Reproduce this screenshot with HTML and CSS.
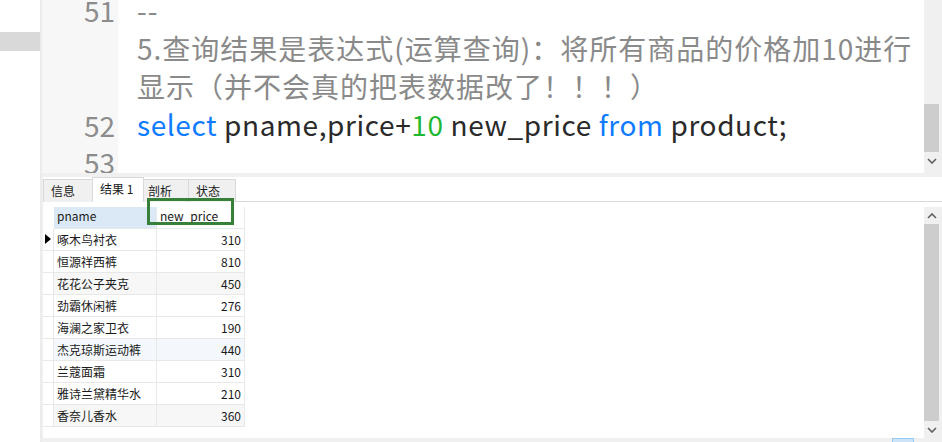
FILE: index.html
```html
<!DOCTYPE html>
<html>
<head>
<meta charset="utf-8">
<link rel="stylesheet" href="styles.css">
</head>
<body>
<div class="app">
  <div class="side"><div class="side-block"></div></div>
  <div class="main">
    <div class="editor">
      <div class="gutter">
        <div class="ln ln51">51</div>
        <div class="ln">52</div>
        <div class="ln">53</div>
      </div>
      <div class="code">
        <div class="line cm">--</div>
        <div class="line cm">5.查询结果是表达式(运算查询)：将所有商品的价格加10进行</div>
        <div class="line cm">显示（并不会真的把表数据改了！！！）</div>
        <div class="line"><span class="kw">select</span> pname,price+<span class="num">10</span> new_price <span class="kw">from</span> product;</div>
        <div class="line"></div>
      </div>
      <div class="vscroll ed-scroll">
        <div class="thumb ed-thumb"></div>
        <div class="arrow down">
          <svg width="10" height="6" viewBox="0 0 10 6"><path d="M1 1 L5 5 L9 1" fill="none" stroke="#606060" stroke-width="1.6"/></svg>
        </div>
      </div>
    </div>
    <div class="split"></div>
    <div class="results">
      <div class="tabs">
        <div class="tab t1">信息</div>
        <div class="tab active">结果 1</div>
        <div class="tab t3">剖析</div>
        <div class="tab t4">状态</div>
      </div>
      <div class="grid-area">
        <div class="grid">
          <div class="row head">
            <div class="ind"></div>
            <div class="cell c1 sel">pname</div>
            <div class="cell c2">new_price</div>
          </div>
          <div class="row"><div class="ind"><span class="tri"></span></div><div class="cell c1">啄木鸟衬衣</div><div class="cell c2 r">310</div></div>
          <div class="row"><div class="ind"></div><div class="cell c1">恒源祥西裤</div><div class="cell c2 r">810</div></div>
          <div class="row alt"><div class="ind"></div><div class="cell c1">花花公子夹克</div><div class="cell c2 r">450</div></div>
          <div class="row"><div class="ind"></div><div class="cell c1">劲霸休闲裤</div><div class="cell c2 r">276</div></div>
          <div class="row"><div class="ind"></div><div class="cell c1">海澜之家卫衣</div><div class="cell c2 r">190</div></div>
          <div class="row hover"><div class="ind"></div><div class="cell c1">杰克琼斯运动裤</div><div class="cell c2 r">440</div></div>
          <div class="row"><div class="ind"></div><div class="cell c1">兰蔻面霜</div><div class="cell c2 r">310</div></div>
          <div class="row"><div class="ind"></div><div class="cell c1">雅诗兰黛精华水</div><div class="cell c2 r">210</div></div>
          <div class="row alt"><div class="ind"></div><div class="cell c1">香奈儿香水</div><div class="cell c2 r">360</div></div>
          <div class="mark"></div>
        </div>
        <div class="vscroll grid-scroll">
          <div class="arrow up">
            <svg width="10" height="6" viewBox="0 0 10 6"><path d="M1 5 L5 1 L9 5" fill="none" stroke="#606060" stroke-width="1.6"/></svg>
          </div>
          <div class="thumb grid-thumb"></div>
          <div class="arrow down">
            <svg width="10" height="6" viewBox="0 0 10 6"><path d="M1 1 L5 5 L9 1" fill="none" stroke="#606060" stroke-width="1.6"/></svg>
          </div>
        </div>
      </div>
    </div>
    <div class="hbar"><div class="hthumb"></div></div>
  </div>
</div>
</body>
</html>
```
FILE: styles.css
```css
html, body {
  margin: 0;
  padding: 0;
  background: #ffffff;
}
body {
  width: 942px;
  height: 442px;
  overflow: hidden;
  font-family: "Noto Sans CJK SC", "DejaVu Sans", sans-serif;
}
.app {
  display: flex;
  width: 942px;
  height: 442px;
}
.side {
  width: 40px;
  flex: none;
  background: #ffffff;
  padding-top: 32px;
  box-sizing: border-box;
}
.side-block {
  height: 19px;
  background: #d9d9d9;
}
.main {
  flex: 1;
  display: flex;
  flex-direction: column;
  border-left: 2px solid #ececec;
  min-width: 0;
}
.editor {
  height: 173px;
  display: flex;
  flex: none;
  overflow: hidden;
}
.gutter {
  width: 76px;
  flex: none;
  background: #f7f7f7;
  box-sizing: border-box;
  padding-right: 3px;
  text-align: right;
  color: #8c8c8c;
  font-size: 28px;
  line-height: 38px;
}
.ln {
  height: 37px;
}
.ln51 {
  height: 115px;
  margin-top: -9px;
}
.code {
  flex: 1;
  padding-left: 19px;
  font-size: 28px;
  letter-spacing: 0.6px;
  line-height: 38px;
  color: #2a2a2a;
  white-space: nowrap;
  overflow: hidden;
}
.line {
  height: 38px;
}
.line:first-child {
  margin-top: -9px;
}
.cm {
  color: #8a8a8a;
  letter-spacing: 1px;
}
.kw {
  color: #0f7cff;
}
.num {
  color: #1fb82f;
}
.vscroll {
  width: 18px;
  flex: none;
  background: #f0f0f0;
  display: flex;
  flex-direction: column;
  align-items: flex-start;
}
.ed-scroll {
  padding-top: 104px;
  box-sizing: border-box;
}
.thumb {
  width: 15px;
  background: #cdcdcd;
}
.ed-thumb {
  height: 48px;
}
.arrow {
  width: 15px;
  height: 17px;
  display: flex;
  align-items: center;
  justify-content: center;
}
.split {
  height: 4px;
  flex: none;
  background: #f0f0f0;
}
.results {
  flex: 1;
  display: flex;
  flex-direction: column;
  min-height: 0;
  border-left: 1px solid #f0f0f0;
}
.tabs {
  height: 24px;
  flex: none;
  display: flex;
  align-items: flex-end;
  border-bottom: 1px solid #d9d9d9;
  font-size: 12px;
  color: #1a1a1a;
}
.tab {
  box-sizing: border-box;
  background: #f0f0f0;
  border: 1px solid #d9d9d9;
  border-bottom: none;
  padding: 0 0 0 7px;
  line-height: 21px;
  width: 50px;
  height: 23px;
  margin-bottom: -1px;
  white-space: nowrap;
}
.tab.active {
  background: #ffffff;
  height: 25px;
  width: 52px;
  line-height: 22px;
}
.tab.t3 {
  width: 46px;
  padding-left: 4px;
}
.tab.t4 {
  width: 48px;
}
.tab + .tab {
  margin-left: -1px;
}
.grid-area {
  flex: 1;
  display: flex;
  padding-top: 5px;
  min-height: 0;
}
.grid {
  flex: 1;
  position: relative;
  font-size: 12px;
  color: #1a1a1a;
}
.row {
  display: flex;
  height: 22px;
}
.ind {
  width: 11px;
  box-sizing: border-box;
  border-right: 1px solid #e8e8e8;
  border-bottom: 1px solid #e8e8e8;
  position: relative;
}
.head .ind {
  border-bottom: none;
  border-right: none;
}
.tri {
  position: absolute;
  left: 2px;
  top: 5px;
  width: 0;
  height: 0;
  border-top: 5px solid transparent;
  border-bottom: 5px solid transparent;
  border-left: 6px solid #000000;
}
.cell {
  box-sizing: border-box;
  border-right: 1px solid #e8e8e8;
  border-bottom: 1px solid #e8e8e8;
  padding: 0 3px;
  line-height: 21px;
  white-space: nowrap;
}
.c1 {
  width: 103px;
}
.c2 {
  width: 88px;
}
.r {
  text-align: right;
}
.head .cell {
  line-height: 18px;
}
.head .sel {
  background: #dbe9f6;
}
.alt .cell {
  background: #f7f7f7;
}
.hover .cell {
  background: #f4f8fc;
}
.mark {
  position: absolute;
  left: 104px;
  top: -9px;
  width: 87px;
  height: 27px;
  box-sizing: border-box;
  border: 3px solid #36803a;
}
.grid-scroll {
  height: 231px;
}
.grid-thumb {
  flex: 1;
}
.hbar {
  height: 4px;
  flex: none;
  background: #f0f0f0;
  position: relative;
}
.hthumb {
  position: absolute;
  left: 850px;
  top: 0;
  width: 22px;
  height: 4px;
  box-sizing: border-box;
  background: #cce4f7;
  border: 1px solid #99c9ef;
  border-bottom: none;
}
```
